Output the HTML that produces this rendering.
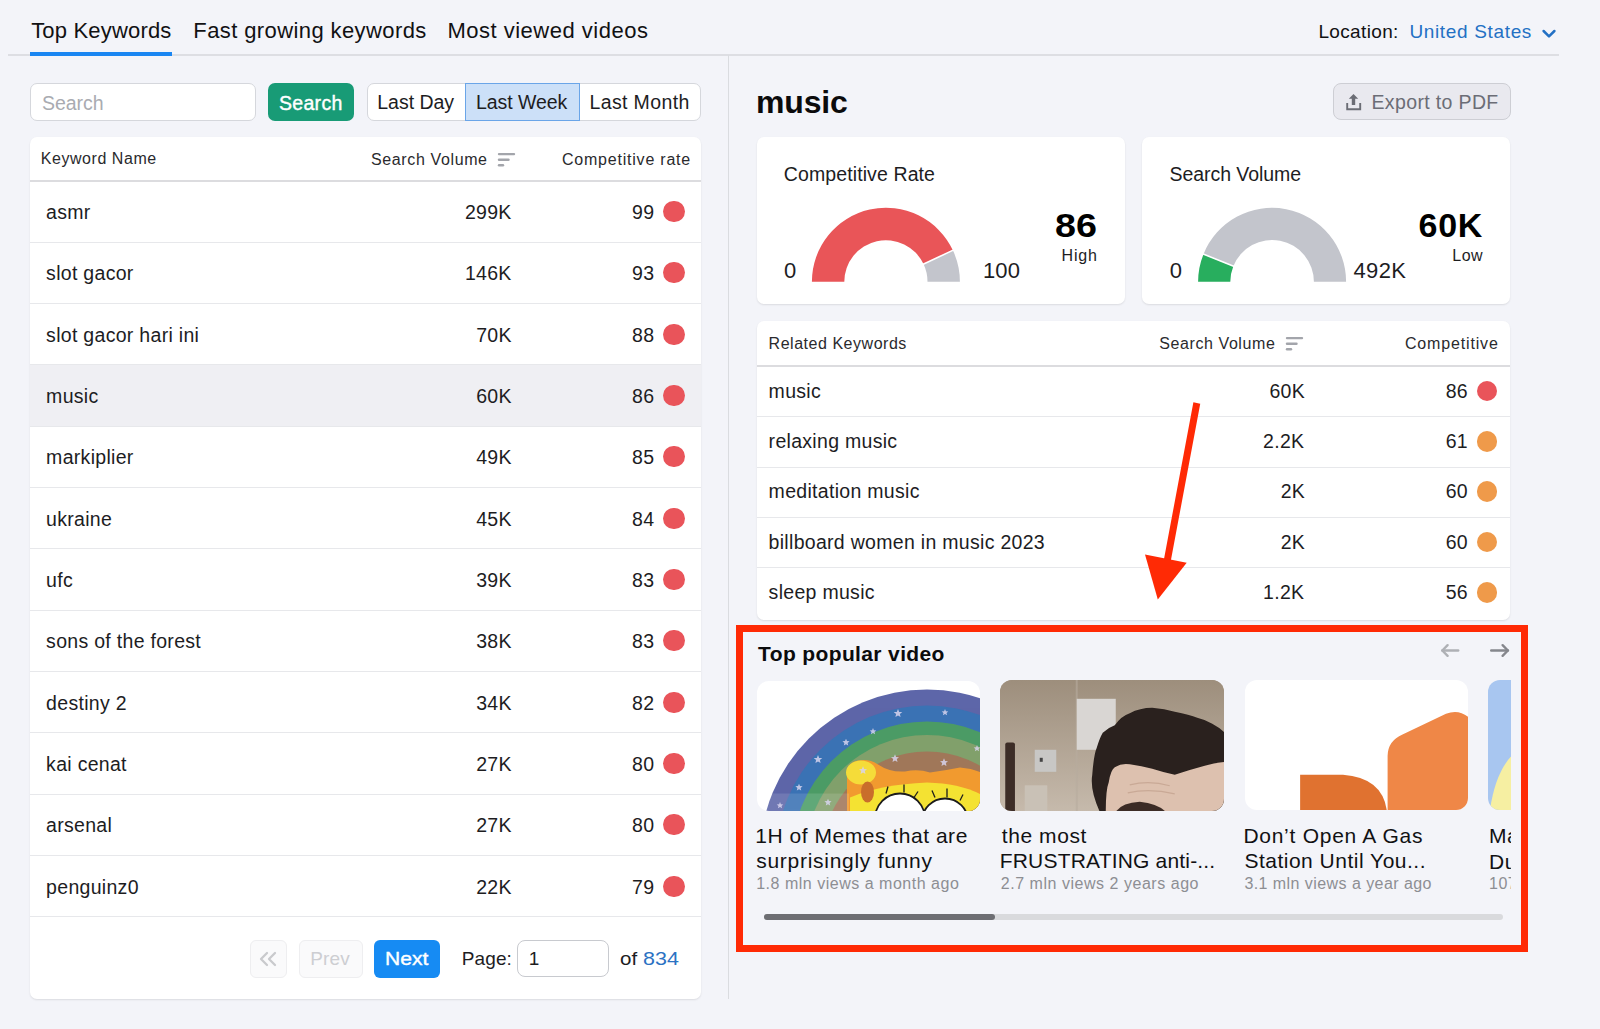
<!DOCTYPE html><html><head><meta charset="utf-8"><style>
*{box-sizing:border-box;margin:0;padding:0}
html,body{width:1600px;height:1029px;overflow:hidden;background:#F3F4F9;font-family:"Liberation Sans",sans-serif;color:#1d1d1f}
.a{position:absolute;white-space:nowrap;line-height:normal}
.b{position:absolute}
</style></head><body>
<div class="a" style="left:31.20px;top:18.08px;font-size:22px;font-weight:normal;color:#111113;letter-spacing:0.182px;">Top Keywords</div>
<div class="a" style="left:193.30px;top:18.18px;font-size:22px;font-weight:normal;color:#111113;letter-spacing:0.400px;">Fast growing keywords</div>
<div class="a" style="left:447.40px;top:18.28px;font-size:22px;font-weight:normal;color:#111113;letter-spacing:0.506px;">Most viewed videos</div>
<div class="a" style="left:1318.40px;top:21.00px;font-size:19px;font-weight:normal;color:#111113;letter-spacing:0.362px;">Location:</div>
<div class="a" style="left:1409.40px;top:21.20px;font-size:19px;font-weight:normal;color:#2370C4;letter-spacing:0.658px;">United States</div>
<svg class="b" style="left:1540px;top:26px" width="18" height="14" viewBox="0 0 18 14"><path d="M3.6 5 L9 10.4 L14.4 5" fill="none" stroke="#2370C4" stroke-width="2.5" stroke-linecap="round" stroke-linejoin="round"/></svg>
<div class="b" style="left:8px;top:54px;width:1551px;height:2px;background:#DDDEE3"></div>
<div class="b" style="left:30px;top:52px;width:142px;height:4px;background:#1A86F2"></div>
<div class="b" style="left:728px;top:55px;width:1px;height:944px;background:#DADCE0"></div>
<div class="b" style="left:30px;top:83px;width:226px;height:38px;background:#fff;border:1px solid #D5D7DC;border-radius:7px"></div>
<div class="a" style="left:42.00px;top:91.65px;font-size:19.5px;font-weight:normal;color:#A9ABB1;letter-spacing:-0.060px;">Search</div>
<div class="b" style="left:267.5px;top:83px;width:86.5px;height:37.5px;background:#189B76;border-radius:7px"></div>
<div class="a" style="left:278.90px;top:91.65px;font-size:19.5px;font-weight:normal;color:#ffffff;letter-spacing:0.340px;-webkit-text-stroke:0.4px #fff;">Search</div>
<div class="b" style="left:367px;top:83px;width:334px;height:38px;background:#fff;border:1px solid #D5D7DC;border-radius:7px"></div>
<div class="b" style="left:465px;top:83px;width:115px;height:38px;background:#CCE0F8;border:1px solid #6AA5E8"></div>
<div class="a" style="left:377.30px;top:91.25px;font-size:19.5px;font-weight:normal;color:#1d1d1f;letter-spacing:-0.029px;">Last Day</div>
<div class="a" style="left:476.10px;top:91.25px;font-size:19.5px;font-weight:normal;color:#1d1d1f;letter-spacing:-0.088px;">Last Week</div>
<div class="a" style="left:589.50px;top:91.25px;font-size:19.5px;font-weight:normal;color:#1d1d1f;letter-spacing:0.367px;">Last Month</div>
<div class="b" style="left:30px;top:137px;width:671px;height:862px;background:#fff;border-radius:7px;box-shadow:0 1px 2px rgba(0,0,0,.10)"></div>
<div class="a" style="left:40.80px;top:150.32px;font-size:16px;font-weight:normal;color:#2a2a2d;letter-spacing:0.545px;">Keyword Name</div>
<div class="a" style="left:371.00px;top:150.82px;font-size:16px;font-weight:normal;color:#2a2a2d;letter-spacing:0.625px;">Search Volume</div>
<div class="a" style="left:562.00px;top:150.82px;font-size:16px;font-weight:normal;color:#2a2a2d;letter-spacing:0.780px;">Competitive rate</div>
<svg class="b" style="left:496.5px;top:151.5px" width="20" height="16" viewBox="0 0 20 16"><g stroke="#A3A5AB" stroke-width="2.4" stroke-linecap="round"><line x1="2" y1="2.1" x2="17" y2="2.1"/><line x1="2" y1="7.8" x2="11.5" y2="7.8"/><line x1="2" y1="13.3" x2="6" y2="13.3"/></g></svg>
<div class="b" style="left:30px;top:180px;width:671px;height:2px;background:#DCDCDF"></div>
<div class="b" style="left:30px;top:241.80px;width:671px;height:1px;background:#E7E8EB"></div>
<div class="a" style="left:46.10px;top:201.10px;font-size:19.5px;font-weight:normal;color:#1d1d1f;letter-spacing:0.300px;">asmr</div>
<div class="a" style="left:464.90px;top:201.10px;font-size:19.5px;font-weight:normal;color:#1d1d1f;letter-spacing:0.300px;">299K</div>
<div class="a" style="left:632.10px;top:201.10px;font-size:19.5px;font-weight:normal;color:#1d1d1f;letter-spacing:0.300px;">99</div>
<div class="b" style="left:663.4px;top:200.95px;width:21.2px;height:21.2px;border-radius:50%;background:#E9545A"></div>
<div class="b" style="left:30px;top:303.13px;width:671px;height:1px;background:#E7E8EB"></div>
<div class="a" style="left:46.10px;top:262.43px;font-size:19.5px;font-weight:normal;color:#1d1d1f;letter-spacing:0.300px;">slot gacor</div>
<div class="a" style="left:464.90px;top:262.43px;font-size:19.5px;font-weight:normal;color:#1d1d1f;letter-spacing:0.300px;">146K</div>
<div class="a" style="left:632.10px;top:262.43px;font-size:19.5px;font-weight:normal;color:#1d1d1f;letter-spacing:0.300px;">93</div>
<div class="b" style="left:663.4px;top:262.28px;width:21.2px;height:21.2px;border-radius:50%;background:#E9545A"></div>
<div class="b" style="left:30px;top:364.46px;width:671px;height:1px;background:#E7E8EB"></div>
<div class="a" style="left:46.10px;top:323.76px;font-size:19.5px;font-weight:normal;color:#1d1d1f;letter-spacing:0.300px;">slot gacor hari ini</div>
<div class="a" style="left:476.20px;top:323.76px;font-size:19.5px;font-weight:normal;color:#1d1d1f;letter-spacing:0.300px;">70K</div>
<div class="a" style="left:632.10px;top:323.76px;font-size:19.5px;font-weight:normal;color:#1d1d1f;letter-spacing:0.300px;">88</div>
<div class="b" style="left:663.4px;top:323.61px;width:21.2px;height:21.2px;border-radius:50%;background:#E9545A"></div>
<div class="b" style="left:30px;top:365.46px;width:671px;height:60.83px;background:#EFEFF3"></div>
<div class="b" style="left:30px;top:425.79px;width:671px;height:1px;background:#E7E8EB"></div>
<div class="a" style="left:46.10px;top:385.09px;font-size:19.5px;font-weight:normal;color:#1d1d1f;letter-spacing:0.300px;">music</div>
<div class="a" style="left:476.20px;top:385.09px;font-size:19.5px;font-weight:normal;color:#1d1d1f;letter-spacing:0.300px;">60K</div>
<div class="a" style="left:632.10px;top:385.09px;font-size:19.5px;font-weight:normal;color:#1d1d1f;letter-spacing:0.300px;">86</div>
<div class="b" style="left:663.4px;top:384.94px;width:21.2px;height:21.2px;border-radius:50%;background:#E9545A"></div>
<div class="b" style="left:30px;top:487.12px;width:671px;height:1px;background:#E7E8EB"></div>
<div class="a" style="left:46.10px;top:446.42px;font-size:19.5px;font-weight:normal;color:#1d1d1f;letter-spacing:0.300px;">markiplier</div>
<div class="a" style="left:476.20px;top:446.42px;font-size:19.5px;font-weight:normal;color:#1d1d1f;letter-spacing:0.300px;">49K</div>
<div class="a" style="left:632.10px;top:446.42px;font-size:19.5px;font-weight:normal;color:#1d1d1f;letter-spacing:0.300px;">85</div>
<div class="b" style="left:663.4px;top:446.27px;width:21.2px;height:21.2px;border-radius:50%;background:#E9545A"></div>
<div class="b" style="left:30px;top:548.45px;width:671px;height:1px;background:#E7E8EB"></div>
<div class="a" style="left:46.10px;top:507.75px;font-size:19.5px;font-weight:normal;color:#1d1d1f;letter-spacing:0.300px;">ukraine</div>
<div class="a" style="left:476.20px;top:507.75px;font-size:19.5px;font-weight:normal;color:#1d1d1f;letter-spacing:0.300px;">45K</div>
<div class="a" style="left:632.10px;top:507.75px;font-size:19.5px;font-weight:normal;color:#1d1d1f;letter-spacing:0.300px;">84</div>
<div class="b" style="left:663.4px;top:507.60px;width:21.2px;height:21.2px;border-radius:50%;background:#E9545A"></div>
<div class="b" style="left:30px;top:609.78px;width:671px;height:1px;background:#E7E8EB"></div>
<div class="a" style="left:46.10px;top:569.08px;font-size:19.5px;font-weight:normal;color:#1d1d1f;letter-spacing:0.300px;">ufc</div>
<div class="a" style="left:476.20px;top:569.08px;font-size:19.5px;font-weight:normal;color:#1d1d1f;letter-spacing:0.300px;">39K</div>
<div class="a" style="left:632.10px;top:569.08px;font-size:19.5px;font-weight:normal;color:#1d1d1f;letter-spacing:0.300px;">83</div>
<div class="b" style="left:663.4px;top:568.93px;width:21.2px;height:21.2px;border-radius:50%;background:#E9545A"></div>
<div class="b" style="left:30px;top:671.11px;width:671px;height:1px;background:#E7E8EB"></div>
<div class="a" style="left:46.10px;top:630.41px;font-size:19.5px;font-weight:normal;color:#1d1d1f;letter-spacing:0.300px;">sons of the forest</div>
<div class="a" style="left:476.20px;top:630.41px;font-size:19.5px;font-weight:normal;color:#1d1d1f;letter-spacing:0.300px;">38K</div>
<div class="a" style="left:632.10px;top:630.41px;font-size:19.5px;font-weight:normal;color:#1d1d1f;letter-spacing:0.300px;">83</div>
<div class="b" style="left:663.4px;top:630.26px;width:21.2px;height:21.2px;border-radius:50%;background:#E9545A"></div>
<div class="b" style="left:30px;top:732.44px;width:671px;height:1px;background:#E7E8EB"></div>
<div class="a" style="left:46.10px;top:691.74px;font-size:19.5px;font-weight:normal;color:#1d1d1f;letter-spacing:0.300px;">destiny 2</div>
<div class="a" style="left:476.20px;top:691.74px;font-size:19.5px;font-weight:normal;color:#1d1d1f;letter-spacing:0.300px;">34K</div>
<div class="a" style="left:632.10px;top:691.74px;font-size:19.5px;font-weight:normal;color:#1d1d1f;letter-spacing:0.300px;">82</div>
<div class="b" style="left:663.4px;top:691.59px;width:21.2px;height:21.2px;border-radius:50%;background:#E9545A"></div>
<div class="b" style="left:30px;top:793.77px;width:671px;height:1px;background:#E7E8EB"></div>
<div class="a" style="left:46.10px;top:753.07px;font-size:19.5px;font-weight:normal;color:#1d1d1f;letter-spacing:0.300px;">kai cenat</div>
<div class="a" style="left:476.20px;top:753.07px;font-size:19.5px;font-weight:normal;color:#1d1d1f;letter-spacing:0.300px;">27K</div>
<div class="a" style="left:632.10px;top:753.07px;font-size:19.5px;font-weight:normal;color:#1d1d1f;letter-spacing:0.300px;">80</div>
<div class="b" style="left:663.4px;top:752.92px;width:21.2px;height:21.2px;border-radius:50%;background:#E9545A"></div>
<div class="b" style="left:30px;top:855.10px;width:671px;height:1px;background:#E7E8EB"></div>
<div class="a" style="left:46.10px;top:814.40px;font-size:19.5px;font-weight:normal;color:#1d1d1f;letter-spacing:0.300px;">arsenal</div>
<div class="a" style="left:476.20px;top:814.40px;font-size:19.5px;font-weight:normal;color:#1d1d1f;letter-spacing:0.300px;">27K</div>
<div class="a" style="left:632.10px;top:814.40px;font-size:19.5px;font-weight:normal;color:#1d1d1f;letter-spacing:0.300px;">80</div>
<div class="b" style="left:663.4px;top:814.25px;width:21.2px;height:21.2px;border-radius:50%;background:#E9545A"></div>
<div class="b" style="left:30px;top:916.43px;width:671px;height:1px;background:#E7E8EB"></div>
<div class="a" style="left:46.10px;top:875.73px;font-size:19.5px;font-weight:normal;color:#1d1d1f;letter-spacing:0.300px;">penguinz0</div>
<div class="a" style="left:476.20px;top:875.73px;font-size:19.5px;font-weight:normal;color:#1d1d1f;letter-spacing:0.300px;">22K</div>
<div class="a" style="left:632.10px;top:875.73px;font-size:19.5px;font-weight:normal;color:#1d1d1f;letter-spacing:0.300px;">79</div>
<div class="b" style="left:663.4px;top:875.58px;width:21.2px;height:21.2px;border-radius:50%;background:#E9545A"></div>
<div class="b" style="left:250px;top:940px;width:37px;height:37.5px;border:1px solid #EEEEF0;border-radius:6px;background:#FAFAFB"></div>
<svg class="b" style="left:258px;top:950px" width="22" height="18" viewBox="0 0 22 18"><g fill="none" stroke="#C9CACD" stroke-width="2.3" stroke-linecap="round" stroke-linejoin="round"><path d="M9 3 L3 9 L9 15"/><path d="M17 3 L11 9 L17 15"/></g></svg>
<div class="b" style="left:298.5px;top:940px;width:64px;height:37.5px;border:1px solid #EEEEF0;border-radius:6px;background:#FAFAFB"></div>
<div class="a" style="left:310.25px;top:947.80px;font-size:19px;font-weight:normal;color:#CDCED2;letter-spacing:0.167px;">Prev</div>
<div class="b" style="left:374px;top:940px;width:66px;height:37.5px;border-radius:6px;background:#168BF3"></div>
<div class="a" style="left:384.89px;top:947.80px;font-size:19px;font-weight:normal;color:#ffffff;transform:scaleX(1.1079);transform-origin:0 0;-webkit-text-stroke:0.4px #fff;">Next</div>
<div class="a" style="left:461.80px;top:947.50px;font-size:19px;font-weight:normal;color:#1d1d1f;letter-spacing:0.100px;">Page:</div>
<div class="b" style="left:517.2px;top:939.7px;width:91.4px;height:37.5px;border:1px solid #C8CACF;border-radius:8px;background:#fff"></div>
<div class="a" style="left:528.70px;top:948.30px;font-size:19px;font-weight:normal;color:#1d1d1f;letter-spacing:0.000px;">1</div>
<div class="a" style="left:619.92px;top:947.50px;font-size:19px;font-weight:normal;color:#1d1d1f;transform:scaleX(1.0800);transform-origin:0 0;">of</div>
<div class="a" style="left:643.07px;top:947.50px;font-size:19px;font-weight:normal;color:#2B72C3;transform:scaleX(1.1300);transform-origin:0 0;">834</div>
<div class="a" style="left:755.90px;top:83.93px;font-size:32px;font-weight:bold;color:#0b0b0c;letter-spacing:-0.125px;">music</div>
<div class="b" style="left:1333.3px;top:82.9px;width:177.6px;height:37.4px;border:1px solid #CDCED4;border-radius:8px;background:#E9E9EF"></div>
<svg class="b" style="left:1344px;top:92px" width="20" height="20" viewBox="0 0 20 20"><path d="M9.5 2 L14.2 6.8 H11.2 V13 H7.8 V6.8 H4.8 Z" fill="#6B6D75"/><path d="M3.2 11 V17.3 H16.2 V11" fill="none" stroke="#6B6D75" stroke-width="1.9" stroke-linejoin="miter"/></svg>
<div class="a" style="left:1371.50px;top:91.25px;font-size:19.5px;font-weight:normal;color:#6B6D76;letter-spacing:0.358px;">Export to PDF</div>
<div class="b" style="left:757px;top:137px;width:368px;height:167px;background:#fff;border-radius:7px;box-shadow:0 1px 2px rgba(0,0,0,.10)"></div>
<div class="a" style="left:783.80px;top:162.65px;font-size:19.5px;font-weight:normal;color:#1d1d1f;letter-spacing:0.107px;">Competitive Rate</div>
<svg class="b" style="left:0;top:0" width="1600" height="1029"><path d="M811.90 281.80 A74.0 74.0 0 0 1 952.86 250.29 L923.54 264.09 A41.6 41.6 0 0 0 844.30 281.80 Z" fill="#E95558"/><path d="M952.86 250.29 A74.0 74.0 0 0 1 959.90 281.80 L927.50 281.80 A41.6 41.6 0 0 0 923.54 264.09 Z" fill="#C3C5CC"/><line x1="953.76" y1="249.87" x2="922.64" y2="264.51" stroke="#fff" stroke-width="1.6"/></svg>
<div class="a" style="left:783.90px;top:258.08px;font-size:22px;font-weight:normal;color:#1d1d1f;letter-spacing:0.000px;">0</div>
<div class="a" style="left:982.90px;top:258.08px;font-size:22px;font-weight:normal;color:#1d1d1f;letter-spacing:0.200px;">100</div>
<div class="a" style="left:1054.79px;top:205.92px;font-size:34px;font-weight:bold;color:#000;transform:scaleX(1.1083);transform-origin:0 0;">86</div>
<div class="a" style="left:1061.50px;top:246.52px;font-size:16px;font-weight:normal;color:#1d1d1f;letter-spacing:0.867px;">High</div>
<div class="b" style="left:1142px;top:137px;width:368px;height:167px;background:#fff;border-radius:7px;box-shadow:0 1px 2px rgba(0,0,0,.10)"></div>
<div class="a" style="left:1169.60px;top:162.65px;font-size:19.5px;font-weight:normal;color:#1d1d1f;letter-spacing:-0.067px;">Search Volume</div>
<svg class="b" style="left:0;top:0" width="1600" height="1029"><path d="M1198.10 281.80 A74.0 74.0 0 0 1 1203.47 254.13 L1233.33 266.17 A41.8 41.8 0 0 0 1230.30 281.80 Z" fill="#28AE5E"/><path d="M1203.47 254.13 A74.0 74.0 0 0 1 1346.10 281.80 L1313.90 281.80 A41.8 41.8 0 0 0 1233.33 266.17 Z" fill="#C3C5CC"/><line x1="1202.54" y1="253.75" x2="1234.26" y2="266.54" stroke="#fff" stroke-width="1.6"/></svg>
<div class="a" style="left:1169.75px;top:258.08px;font-size:22px;font-weight:normal;color:#1d1d1f;letter-spacing:0.000px;">0</div>
<div class="a" style="left:1353.50px;top:258.28px;font-size:22px;font-weight:normal;color:#1d1d1f;letter-spacing:0.333px;">492K</div>
<div class="a" style="left:1418.50px;top:206.02px;font-size:34px;font-weight:bold;color:#000;letter-spacing:0.750px;">60K</div>
<div class="a" style="left:1452.30px;top:246.52px;font-size:16px;font-weight:normal;color:#1d1d1f;letter-spacing:0.450px;">Low</div>
<div class="b" style="left:757px;top:321px;width:753px;height:298.5px;background:#fff;border-radius:7px;box-shadow:0 1px 2px rgba(0,0,0,.10)"></div>
<div class="a" style="left:768.60px;top:335.22px;font-size:16px;font-weight:normal;color:#2a2a2d;letter-spacing:0.527px;">Related Keywords</div>
<div class="a" style="left:1159.30px;top:335.12px;font-size:16px;font-weight:normal;color:#2a2a2d;letter-spacing:0.583px;">Search Volume</div>
<svg class="b" style="left:1284.5px;top:336px" width="20" height="16" viewBox="0 0 20 16"><g stroke="#A3A5AB" stroke-width="2.4" stroke-linecap="round"><line x1="2" y1="2.1" x2="17" y2="2.1"/><line x1="2" y1="7.8" x2="11.5" y2="7.8"/><line x1="2" y1="13.3" x2="6" y2="13.3"/></g></svg>
<div class="a" style="left:1404.90px;top:335.12px;font-size:16px;font-weight:normal;color:#2a2a2d;letter-spacing:0.850px;">Competitive</div>
<div class="b" style="left:757px;top:364.5px;width:753px;height:2px;background:#DCDCDF"></div>
<div class="b" style="left:757px;top:416.20px;width:753px;height:1px;background:#E7E8EB"></div>
<div class="a" style="left:768.60px;top:379.85px;font-size:19.5px;font-weight:normal;color:#1d1d1f;letter-spacing:0.300px;">music</div>
<div class="a" style="left:1269.40px;top:379.85px;font-size:19.5px;font-weight:normal;color:#1d1d1f;letter-spacing:0.300px;">60K</div>
<div class="a" style="left:1445.70px;top:379.85px;font-size:19.5px;font-weight:normal;color:#1d1d1f;letter-spacing:0.300px;">86</div>
<div class="b" style="left:1476.6px;top:380.70px;width:20.8px;height:20.8px;border-radius:50%;background:#E9545A"></div>
<div class="b" style="left:757px;top:466.50px;width:753px;height:1px;background:#E7E8EB"></div>
<div class="a" style="left:768.60px;top:430.15px;font-size:19.5px;font-weight:normal;color:#1d1d1f;letter-spacing:0.300px;">relaxing music</div>
<div class="a" style="left:1263.10px;top:430.15px;font-size:19.5px;font-weight:normal;color:#1d1d1f;letter-spacing:0.300px;">2.2K</div>
<div class="a" style="left:1445.70px;top:430.15px;font-size:19.5px;font-weight:normal;color:#1d1d1f;letter-spacing:0.300px;">61</div>
<div class="b" style="left:1476.6px;top:431.00px;width:20.8px;height:20.8px;border-radius:50%;background:#EF9A4A"></div>
<div class="b" style="left:757px;top:516.80px;width:753px;height:1px;background:#E7E8EB"></div>
<div class="a" style="left:768.60px;top:480.45px;font-size:19.5px;font-weight:normal;color:#1d1d1f;letter-spacing:0.300px;">meditation music</div>
<div class="a" style="left:1280.70px;top:480.45px;font-size:19.5px;font-weight:normal;color:#1d1d1f;letter-spacing:0.300px;">2K</div>
<div class="a" style="left:1445.70px;top:480.45px;font-size:19.5px;font-weight:normal;color:#1d1d1f;letter-spacing:0.300px;">60</div>
<div class="b" style="left:1476.6px;top:481.30px;width:20.8px;height:20.8px;border-radius:50%;background:#EF9A4A"></div>
<div class="b" style="left:757px;top:567.10px;width:753px;height:1px;background:#E7E8EB"></div>
<div class="a" style="left:768.60px;top:530.75px;font-size:19.5px;font-weight:normal;color:#1d1d1f;letter-spacing:0.300px;">billboard women in music 2023</div>
<div class="a" style="left:1280.70px;top:530.75px;font-size:19.5px;font-weight:normal;color:#1d1d1f;letter-spacing:0.300px;">2K</div>
<div class="a" style="left:1445.70px;top:530.75px;font-size:19.5px;font-weight:normal;color:#1d1d1f;letter-spacing:0.300px;">60</div>
<div class="b" style="left:1476.6px;top:531.60px;width:20.8px;height:20.8px;border-radius:50%;background:#EF9A4A"></div>
<div class="a" style="left:768.60px;top:581.05px;font-size:19.5px;font-weight:normal;color:#1d1d1f;letter-spacing:0.300px;">sleep music</div>
<div class="a" style="left:1263.10px;top:581.05px;font-size:19.5px;font-weight:normal;color:#1d1d1f;letter-spacing:0.300px;">1.2K</div>
<div class="a" style="left:1445.70px;top:581.05px;font-size:19.5px;font-weight:normal;color:#1d1d1f;letter-spacing:0.300px;">56</div>
<div class="b" style="left:1476.6px;top:581.90px;width:20.8px;height:20.8px;border-radius:50%;background:#EF9A4A"></div>
<svg class="b" style="left:0;top:0" width="1600" height="1029"><line x1="1196.8" y1="403" x2="1167" y2="562" stroke="#FF2A05" stroke-width="7"/><path d="M1145 554.6 L1186.7 562.8 L1157.8 599.5 Z" fill="#FF2A05"/></svg>
<div class="a" style="left:758.10px;top:641.59px;font-size:21px;font-weight:bold;color:#0b0b0c;letter-spacing:0.369px;">Top popular video</div>
<svg class="b" style="left:1438px;top:641px" width="24" height="20" viewBox="0 0 24 20"><g fill="none" stroke="#AEB0B5" stroke-width="2.4" stroke-linecap="round" stroke-linejoin="round"><path d="M20.2 9.5 H4.3"/><path d="M9.6 4.2 L4.3 9.5 L9.6 14.8"/></g></svg>
<svg class="b" style="left:1487px;top:641px" width="24" height="20" viewBox="0 0 24 20"><g fill="none" stroke="#85878D" stroke-width="2.4" stroke-linecap="round" stroke-linejoin="round"><path d="M4.2 9.5 H20.9"/><path d="M15.6 4.2 L20.9 9.5 L15.6 14.8"/></g></svg>
<div class="b" style="left:757px;top:670px;width:753.7px;height:150px;overflow:hidden">
<div class="b" style="left:0;top:10.5px;width:222.7px;height:130.5px;border-radius:12px;overflow:hidden;background:#fff"><svg width="223" height="131" viewBox="757 680.5 223 131"><circle cx="927" cy="856" r="167" fill="#5D66A9"/><circle cx="927" cy="856" r="151" fill="#3B72B4"/><circle cx="927" cy="856" r="135" fill="#4C9C66"/><circle cx="927" cy="856" r="121.5" fill="#82A06B"/><circle cx="927" cy="856" r="105" fill="#A0775A"/><path d="M847 812 V772 Q848 762 858 760 Q870 758 878 764 Q890 772 905 771 Q918 768 930 772 Q945 770 960 767 Q972 768 981 772 V812 Z" fill="#F19A30"/><ellipse cx="861" cy="772" rx="15" ry="12" fill="#F5DC3A"/><path d="M850 812 L850 797 Q880 784 927 782 Q960 783 981 794 V812 Z" fill="#F4E233"/><ellipse cx="867.5" cy="791.5" rx="6.5" ry="10.5" fill="#C96F2C"/><circle cx="900" cy="818" r="25" fill="#fff" stroke="#1d1d1d" stroke-width="1.8"/><circle cx="945" cy="821" r="23" fill="#fff" stroke="#1d1d1d" stroke-width="1.8"/><g stroke="#1d1d1d" stroke-width="1.3"><line x1="888" y1="786" x2="886" y2="793"/><line x1="904" y1="784" x2="904" y2="792"/><line x1="918" y1="791" x2="914" y2="797"/><line x1="932" y1="790" x2="935" y2="797"/><line x1="947" y1="788" x2="947" y2="797"/><line x1="963" y1="794" x2="960" y2="800"/></g><rect x="757" y="793" width="92" height="19" fill="#fff" opacity="0.12"/><g fill="#D8D4EE" opacity="0.85"><polygon points="898.0,708.5 899.2,711.4 902.3,711.6 899.9,713.6 900.6,716.6 898.0,715.0 895.4,716.6 896.1,713.6 893.7,711.6 896.8,711.4"/><polygon points="873.0,727.5 873.9,729.7 876.3,729.9 874.5,731.5 875.1,733.8 873.0,732.6 870.9,733.8 871.5,731.5 869.7,729.9 872.1,729.7"/><polygon points="846.0,738.2 847.0,740.6 849.6,740.8 847.6,742.5 848.2,745.1 846.0,743.7 843.8,745.1 844.4,742.5 842.4,740.8 845.0,740.6"/><polygon points="818.0,754.5 819.2,757.4 822.3,757.6 819.9,759.6 820.6,762.6 818.0,761.0 815.4,762.6 816.1,759.6 813.7,757.6 816.8,757.4"/><polygon points="945.0,708.5 945.9,710.7 948.3,710.9 946.5,712.5 947.1,714.8 945.0,713.6 942.9,714.8 943.5,712.5 941.7,710.9 944.1,710.7"/><polygon points="799.0,783.2 800.0,785.6 802.6,785.8 800.6,787.5 801.2,790.1 799.0,788.7 796.8,790.1 797.4,787.5 795.4,785.8 798.0,785.6"/><polygon points="895.0,753.8 896.1,756.5 899.0,756.7 896.8,758.6 897.5,761.4 895.0,759.9 892.5,761.4 893.2,758.6 891.0,756.7 893.9,756.5"/><polygon points="944.0,757.8 945.1,760.5 948.0,760.7 945.8,762.6 946.5,765.4 944.0,763.9 941.5,765.4 942.2,762.6 940.0,760.7 942.9,760.5"/><polygon points="863.0,765.8 864.1,768.5 867.0,768.7 864.8,770.6 865.5,773.4 863.0,771.9 860.5,773.4 861.2,770.6 859.0,768.7 861.9,768.5"/><polygon points="977.0,744.5 977.9,746.7 980.3,746.9 978.5,748.5 979.1,750.8 977.0,749.6 974.9,750.8 975.5,748.5 973.7,746.9 976.1,746.7"/><polygon points="780.0,801.5 780.9,803.7 783.3,803.9 781.5,805.5 782.1,807.8 780.0,806.6 777.9,807.8 778.5,805.5 776.7,803.9 779.1,803.7"/><polygon points="828.0,798.2 829.0,800.6 831.6,800.8 829.6,802.5 830.2,805.1 828.0,803.7 825.8,805.1 826.4,802.5 824.4,800.8 827.0,800.6"/></g></svg></div>
<div class="b" style="left:243.25px;top:10.2px;width:223.5px;height:130.5px;border-radius:12px;overflow:hidden;background:#A99A88"><svg width="224" height="131" viewBox="1000.25 680.2 224 131"><defs><linearGradient id="wall" x1="0" y1="0" x2="0" y2="1"><stop offset="0" stop-color="#9D8E7C"/><stop offset="1" stop-color="#C6BAAC"/></linearGradient></defs><rect x="1000" y="680" width="225" height="132" fill="url(#wall)"/><rect x="1076" y="680" width="2" height="132" fill="#B8AC9E" opacity="0.6"/><rect x="1077" y="699" width="39" height="51" fill="#D9D6D3"/><rect x="1035" y="750" width="21.5" height="22" fill="#C8C7C5"/><rect x="1040" y="758" width="3" height="4" fill="#444"/><rect x="1025" y="785.5" width="22.5" height="30" fill="#C9C1B6"/><rect x="1005.5" y="742.7" width="9.7" height="70" rx="2" fill="#3D2D27"/><path d="M1100 812 Q1090 790 1092.5 775 Q1094 755 1097 748 Q1100 738 1103 733 Q1108 728 1115 725.5 Q1122 716 1130 713.5 Q1140 708 1152.5 708 Q1165 709 1175 712 Q1190 715 1197.5 718 Q1206 720 1212.5 724 Q1220 728 1225 733 L1225 812 Z" fill="#2A211E"/><path d="M1106 812 Q1106 790 1109 782.5 Q1111 770 1115 767.5 Q1122 763 1130 764.5 Q1142 766 1152.5 769 Q1165 773 1175 775 Q1190 770 1205 766 Q1215 763 1225 762 L1225 812 Z" fill="#DDC1AF"/><path d="M1116 812 Q1122 803 1140 802 Q1158 804 1166 812 Z" fill="#3C2C26"/><path d="M1130 785 Q1150 780 1170 786 M1128 793 Q1150 788 1175 794" fill="none" stroke="#C9A996" stroke-width="1.2"/></svg></div>
<div class="b" style="left:488px;top:10.2px;width:222.8px;height:130.3px;border-radius:12px;overflow:hidden;background:#fff"><svg width="223" height="131" viewBox="1245 680.2 223 131"><path d="M1300.1 812 V775 H1343 Q1383 778 1387 812 Z" fill="#E07230"/><path d="M1387.6 812 V756 Q1388 741 1402.5 734.8 L1446 714 Q1458 709 1468 717 V812 Z" fill="#EF8747"/></svg></div>
<div class="b" style="left:731.3px;top:10.2px;width:40px;height:130.3px;border-radius:12px;overflow:hidden;background:#A8C6F0"><svg width="40" height="131" viewBox="1488.3 680.2 40 131"><path d="M1490 812 Q1495 775 1511 757 L1530 757 L1530 812 Z" fill="#F6EFA2"/></svg></div>
</div>
<div class="b" style="left:757px;top:820px;width:753.7px;height:80px;overflow:hidden">
</div>
<div class="a" style="left:755.20px;top:823.79px;font-size:21px;font-weight:normal;color:#111113;letter-spacing:0.537px;">1H of Memes that are</div>
<div class="a" style="left:756.20px;top:849.49px;font-size:21px;font-weight:normal;color:#111113;letter-spacing:0.724px;">surprisingly funny</div>
<div class="a" style="left:756.20px;top:874.52px;font-size:16px;font-weight:normal;color:#8D8E93;letter-spacing:0.512px;">1.8 mln views a month ago</div>
<div class="a" style="left:1001.75px;top:823.79px;font-size:21px;font-weight:normal;color:#111113;letter-spacing:0.579px;">the most</div>
<div class="a" style="left:999.75px;top:849.49px;font-size:21px;font-weight:normal;color:#111113;letter-spacing:0.184px;">FRUSTRATING anti-...</div>
<div class="a" style="left:1000.75px;top:874.52px;font-size:16px;font-weight:normal;color:#8D8E93;letter-spacing:0.531px;">2.7 mln views 2 years ago</div>
<div class="a" style="left:1243.40px;top:823.79px;font-size:21px;font-weight:normal;color:#111113;letter-spacing:0.733px;">Don’t Open A Gas</div>
<div class="a" style="left:1244.40px;top:849.49px;font-size:21px;font-weight:normal;color:#111113;letter-spacing:0.500px;">Station Until You...</div>
<div class="a" style="left:1244.40px;top:874.52px;font-size:16px;font-weight:normal;color:#8D8E93;letter-spacing:0.439px;">3.1 mln views a year ago</div>
<div class="b" style="left:1489px;top:820px;width:21.7px;height:80px;overflow:hidden">
<div class="a" style="left:0px;top:4px;font-size:21px;color:#111113;letter-spacing:0.5px">Ma</div>
<div class="a" style="left:0px;top:29.5px;font-size:21px;color:#111113;letter-spacing:0.5px">Du</div>
<div class="a" style="left:0px;top:54.5px;font-size:16px;color:#8D8E93;letter-spacing:0.5px">107</div>
</div>
<div class="b" style="left:764px;top:913.8px;width:738.7px;height:6.6px;border-radius:4px;background:#D9DADD"></div>
<div class="b" style="left:764px;top:913.8px;width:230.5px;height:6.6px;border-radius:4px;background:#6D6E73"></div>
<div class="b" style="left:736.1px;top:624.6px;width:791.8px;height:327px;border:7.9px solid #FF2A05"></div>
</body></html>
